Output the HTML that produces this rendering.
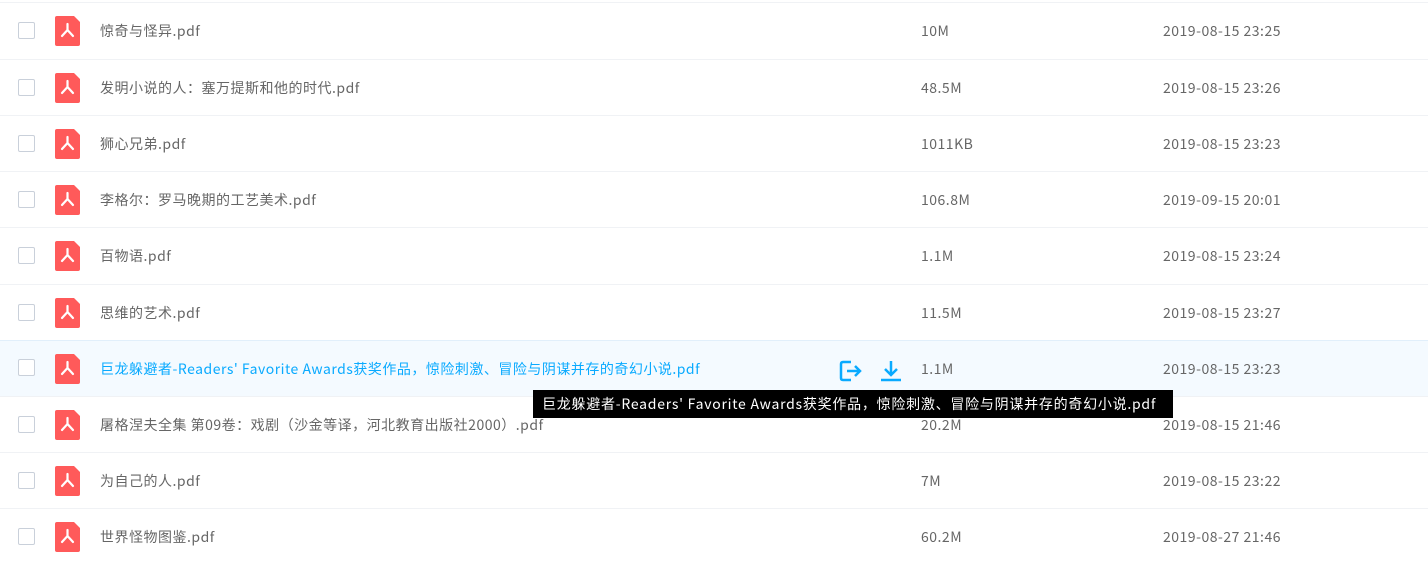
<!DOCTYPE html>
<html><head><meta charset="utf-8"><style>
body{margin:0;width:1428px;height:553px;overflow:hidden;background:#fff;font-family:"Noto Sans CJK SC","Liberation Sans",sans-serif;font-size:14px;line-height:20px;color:#666;position:relative;letter-spacing:0.5px}
.row{position:absolute;left:0;width:1428px;height:56px;border-top:1px solid #f0f2f5;box-sizing:border-box}
.row.h{background:#f4faff;border-top:1px solid #e1effb}
.cb{position:absolute;left:18px;top:19px;width:15px;height:15px;border:1px solid #c9d0da;border-radius:2px;background:#fff}
.ic{position:absolute;left:55px;top:13px;width:25px;height:30px}
.nm{position:absolute;left:100px;top:18px;white-space:nowrap}
.sz{position:absolute;left:921px;top:18px}
.dt{position:absolute;left:1163px;top:18px}
.h .nm{color:#09aaff}
.tip{position:absolute;left:533px;top:390px;height:28px;width:640px;background:#000;color:#fff;line-height:28px;padding-left:9px;box-sizing:border-box;white-space:nowrap;letter-spacing:0.75px}
</style></head><body>
<svg width="0" height="0" style="position:absolute"><defs><g id="pdf"><path d="M0 2Q0 0 2 0H19L25 6V28Q25 30 23 30H2Q0 30 0 28Z" fill="#ff5a5a"/><path d="M12.5 8V14M12.5 14L7 20M12.5 14L18 20" stroke="#fff" stroke-width="2.2" fill="none" stroke-linecap="round"/></g></defs></svg>
<div class="row" style="top:2px"><div class="cb"></div><svg class="ic"><use href="#pdf"/></svg><div class="nm">惊奇与怪异.pdf</div><div class="sz">10M</div><div class="dt">2019-08-15 23:25</div></div>
<div class="row" style="top:59px"><div class="cb"></div><svg class="ic"><use href="#pdf"/></svg><div class="nm">发明小说的人：塞万提斯和他的时代.pdf</div><div class="sz">48.5M</div><div class="dt">2019-08-15 23:26</div></div>
<div class="row" style="top:115px"><div class="cb"></div><svg class="ic"><use href="#pdf"/></svg><div class="nm">狮心兄弟.pdf</div><div class="sz">1011KB</div><div class="dt">2019-08-15 23:23</div></div>
<div class="row" style="top:171px"><div class="cb"></div><svg class="ic"><use href="#pdf"/></svg><div class="nm">李格尔：罗马晚期的工艺美术.pdf</div><div class="sz">106.8M</div><div class="dt">2019-09-15 20:01</div></div>
<div class="row" style="top:227px"><div class="cb"></div><svg class="ic"><use href="#pdf"/></svg><div class="nm">百物语.pdf</div><div class="sz">1.1M</div><div class="dt">2019-08-15 23:24</div></div>
<div class="row" style="top:284px"><div class="cb"></div><svg class="ic"><use href="#pdf"/></svg><div class="nm">思维的艺术.pdf</div><div class="sz">11.5M</div><div class="dt">2019-08-15 23:27</div></div>
<div class="row h" style="top:340px"><div class="cb" style="top:18px"></div><svg class="ic"><use href="#pdf"/></svg><div class="nm">巨龙躲避者-Readers' Favorite Awards获奖作品，惊险刺激、冒险与阴谋并存的奇幻小说.pdf</div>
<svg style="position:absolute;left:838px;top:18px" width="26" height="24" viewBox="0 0 26 24"><path d="M13 3H5Q3 3 3 5V19Q3 21 5 21H13" fill="none" stroke="#09aaff" stroke-width="2.5"/><path d="M9 12H22M17 7L22 12L17 17" fill="none" stroke="#09aaff" stroke-width="2.5"/></svg>
<svg style="position:absolute;left:879px;top:18px" width="24" height="24" viewBox="0 0 24 24"><path d="M12 2V15M6 10L12 16L18 10" fill="none" stroke="#09aaff" stroke-width="2.5"/><path d="M2 21H22" stroke="#09aaff" stroke-width="2.5"/></svg>
<div class="sz">1.1M</div><div class="dt">2019-08-15 23:23</div></div>
<div class="row" style="top:396px"><div class="cb"></div><svg class="ic"><use href="#pdf"/></svg><div class="nm">屠格涅夫全集 第09卷：戏剧（沙金等译，河北教育出版社2000）.pdf</div><div class="sz">20.2M</div><div class="dt">2019-08-15 21:46</div></div>
<div class="row" style="top:452px"><div class="cb"></div><svg class="ic"><use href="#pdf"/></svg><div class="nm">为自己的人.pdf</div><div class="sz">7M</div><div class="dt">2019-08-15 23:22</div></div>
<div class="row" style="top:508px"><div class="cb"></div><svg class="ic"><use href="#pdf"/></svg><div class="nm">世界怪物图鉴.pdf</div><div class="sz">60.2M</div><div class="dt">2019-08-27 21:46</div></div>
<div class="tip">巨龙躲避者-Readers' Favorite Awards获奖作品，惊险刺激、冒险与阴谋并存的奇幻小说.pdf</div>
</body></html>
